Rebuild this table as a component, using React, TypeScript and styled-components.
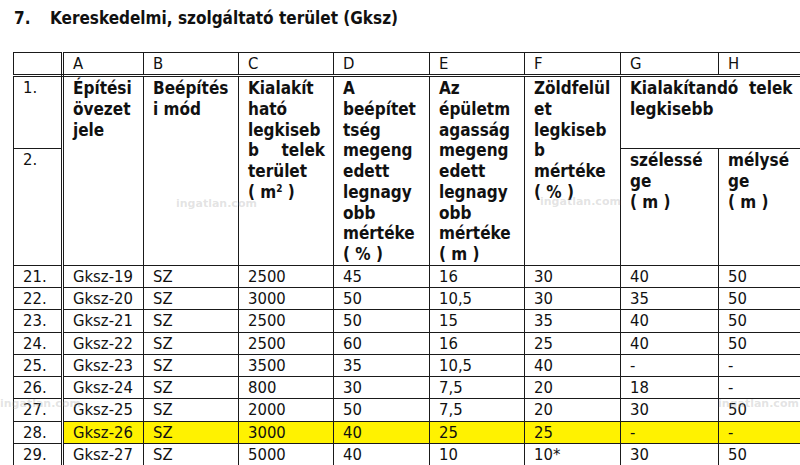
import React from 'react'
import styled, { createGlobalStyle } from 'styled-components'

const GlobalStyle = createGlobalStyle`
  html, body {
    margin: 0;
    padding: 0;
    background: #ffffff;
    overflow: hidden;
  }
  body {
    width: 800px;
    height: 465px;
    font-family: "DejaVu Sans Condensed", "DejaVu Sans", sans-serif;
    color: #111111;
  }
`

const Page = styled.div`
  position: relative;
  width: 800px;
  height: 465px;
  overflow: hidden;
`

const Title = styled.h1`
  display: flex;
  margin: 0;
  padding: 8px 0 0 14px;
  height: 52px;
  box-sizing: border-box;
  font-size: 17px;
  font-weight: bold;
  line-height: 20px;
  white-space: nowrap;
`

const TitleNum = styled.span`
  width: 36px;
`

const Table = styled.table`
  margin-left: 13px;
  width: 802px;
  table-layout: fixed;
  border-collapse: collapse;
  font-size: 16.5px;
  line-height: 21.3px;
`

const Cell = styled.td<{ $bold?: boolean; $rowNum?: boolean; $hl?: boolean }>`
  border: 1px solid #1a1a1a;
  ${({ $rowNum }) => $rowNum && 'border-right: 3px double #1a1a1a;'}
  padding: 0 0 0 9px;
  vertical-align: top;
  white-space: nowrap;
  overflow: hidden;
  font-weight: ${({ $bold }) => ($bold ? 'bold' : 'normal')};
  font-size: ${({ $bold }) => ($bold ? '17px' : '16.5px')};
  background: ${({ $hl }) => ($hl ? '#fff200' : 'transparent')};
`

const LetterRow = styled.tr`
  height: 23px;
  td {
    border-bottom: 3px double #1a1a1a;
    vertical-align: middle;
  }
`

const HeadRow = styled.tr<{ $h: number }>`
  height: ${({ $h }) => $h}px;
  td {
    line-height: 20.7px;
    padding-top: 1px;
  }
`

const DataRow = styled.tr`
  height: 21.9px;
  td {
    vertical-align: middle;
  }
`

const Line = styled.div<{ $justify?: boolean }>`
  padding-right: 8px;
  text-align: left;
  text-align-last: ${({ $justify }) => ($justify ? 'justify' : 'auto')};
`

const Watermark = styled.span`
  position: absolute;
  font-family: "DejaVu Sans", sans-serif;
  font-size: 11px;
  font-weight: bold;
  color: rgba(160, 160, 160, 0.3);
  pointer-events: none;
`

const Sup = styled.sup`
  font-size: 10px;
  vertical-align: 6px;
  line-height: 0;
`

type Row = [string, string, string, string, string, string, string, string, string]

const rows: Row[] = [
  ['21.', 'Gksz-19', 'SZ', '2500', '45', '16', '30', '40', '50'],
  ['22.', 'Gksz-20', 'SZ', '3000', '50', '10,5', '30', '35', '50'],
  ['23.', 'Gksz-21', 'SZ', '2500', '50', '15', '35', '40', '50'],
  ['24.', 'Gksz-22', 'SZ', '2500', '60', '16', '25', '40', '50'],
  ['25.', 'Gksz-23', 'SZ', '3500', '35', '10,5', '40', '-', '-'],
  ['26.', 'Gksz-24', 'SZ', '800', '30', '7,5', '20', '18', '-'],
  ['27.', 'Gksz-25', 'SZ', '2000', '50', '7,5', '20', '30', '50'],
  ['28.', 'Gksz-26', 'SZ', '3000', '40', '25', '25', '-', '-'],
  ['29.', 'Gksz-27', 'SZ', '5000', '40', '10', '10*', '30', '50'],
]

const colWidths = [49, 81, 95, 95, 96, 95, 96, 98, 97]

const lines = (items: React.ReactNode[]) =>
  items.map((t, i) => <Line key={i}>{t}</Line>)

export default function App() {
  return (
    <Page>
      <GlobalStyle />
      <Title>
        <TitleNum>7.</TitleNum>
        Kereskedelmi, szolgáltató terület (Gksz)
      </Title>
      <Table>
        <colgroup>
          {colWidths.map((w, i) => (
            <col key={i} style={{ width: w }} />
          ))}
        </colgroup>
        <tbody>
          <LetterRow>
            <Cell $rowNum />
            {['A', 'B', 'C', 'D', 'E', 'F', 'G', 'H'].map((l) => (
              <Cell key={l}>{l}</Cell>
            ))}
          </LetterRow>
          <HeadRow $h={73}>
            <Cell $rowNum>1.</Cell>
            <Cell $bold rowSpan={2}>
              {lines(['Építési', 'övezet', 'jele'])}
            </Cell>
            <Cell $bold rowSpan={2}>
              {lines(['Beépítés', 'i mód'])}
            </Cell>
            <Cell $bold rowSpan={2}>
              {lines(['Kialakít', 'ható', 'legkiseb'])}
              <Line $justify>b telek</Line>
              {lines([
                'terület',
                <>
                  ( m<Sup>2</Sup> )
                </>,
              ])}
            </Cell>
            <Cell $bold rowSpan={2}>
              {lines(['A', 'beépítet', 'tség', 'megeng', 'edett', 'legnagy', 'obb', 'mértéke', '( % )'])}
            </Cell>
            <Cell $bold rowSpan={2}>
              {lines(['Az', 'épületm', 'agasság', 'megeng', 'edett', 'legnagy', 'obb', 'mértéke', '( m )'])}
            </Cell>
            <Cell $bold rowSpan={2}>
              {lines(['Zöldfelül', 'et', 'legkiseb', 'b', 'mértéke', '( % )'])}
            </Cell>
            <Cell $bold colSpan={2}>
              {lines(['Kialakítandó\u00a0 telek', 'legkisebb'])}
            </Cell>
          </HeadRow>
          <HeadRow $h={116}>
            <Cell $rowNum>2.</Cell>
            <Cell $bold>{lines(['szélessé', 'ge', '( m )'])}</Cell>
            <Cell $bold>{lines(['mélysé', 'ge', '( m )'])}</Cell>
          </HeadRow>
          {rows.map((r) => {
            const hl = r[0] === '28.'
            return (
              <DataRow key={r[0]}>
                <Cell $rowNum>{r[0]}</Cell>
                {r.slice(1).map((v, i) => (
                  <Cell key={i} $hl={hl}>
                    {v}
                  </Cell>
                ))}
              </DataRow>
            )
          })}
        </tbody>
      </Table>
      <Watermark style={{ left: 176, top: 197 }}>ingatlan.com</Watermark>
      <Watermark style={{ left: 540, top: 195 }}>ingatlan.com</Watermark>
      <Watermark style={{ left: 0, top: 397 }}>ingatlan.com</Watermark>
      <Watermark style={{ left: 718, top: 397 }}>ingatlan.com</Watermark>
    </Page>
  )
}
